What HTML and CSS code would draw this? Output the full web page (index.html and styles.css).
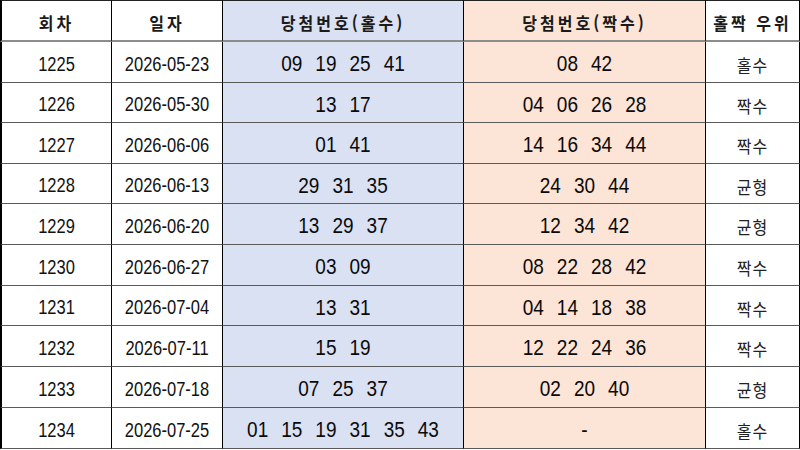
FILE: index.html
```html
<!DOCTYPE html>
<html lang="ko">
<head>
<meta charset="utf-8">
<title>당첨번호 홀짝</title>
<link rel="stylesheet" href="styles.css">
</head>
<body>
<div class="table">
  <div class="cell hd c1"><span class="t">회차</span></div>
  <div class="cell hd c2"><span class="t">일자</span></div>
  <div class="cell hd c3 odd"><span class="t">당첨번호(홀수)</span></div>
  <div class="cell hd c4 even"><span class="t">당첨번호(짝수)</span></div>
  <div class="cell hd c5"><span class="t">홀짝 우위</span></div>

  <div class="cell c1"><span class="t">1225</span></div><div class="cell c2"><span class="t">2026-05-23</span></div>
  <div class="cell c3 odd nums"><span class="t">09</span><span class="t">19</span><span class="t">25</span><span class="t">41</span></div>
  <div class="cell c4 even nums"><span class="t">08</span><span class="t">42</span></div>
  <div class="cell c5 kr"><span class="t">홀수</span></div>

  <div class="cell c1"><span class="t">1226</span></div><div class="cell c2"><span class="t">2026-05-30</span></div>
  <div class="cell c3 odd nums"><span class="t">13</span><span class="t">17</span></div>
  <div class="cell c4 even nums"><span class="t">04</span><span class="t">06</span><span class="t">26</span><span class="t">28</span></div>
  <div class="cell c5 kr"><span class="t">짝수</span></div>

  <div class="cell c1"><span class="t">1227</span></div><div class="cell c2"><span class="t">2026-06-06</span></div>
  <div class="cell c3 odd nums"><span class="t">01</span><span class="t">41</span></div>
  <div class="cell c4 even nums"><span class="t">14</span><span class="t">16</span><span class="t">34</span><span class="t">44</span></div>
  <div class="cell c5 kr"><span class="t">짝수</span></div>

  <div class="cell c1"><span class="t">1228</span></div><div class="cell c2"><span class="t">2026-06-13</span></div>
  <div class="cell c3 odd nums"><span class="t">29</span><span class="t">31</span><span class="t">35</span></div>
  <div class="cell c4 even nums"><span class="t">24</span><span class="t">30</span><span class="t">44</span></div>
  <div class="cell c5 kr"><span class="t">균형</span></div>

  <div class="cell c1"><span class="t">1229</span></div><div class="cell c2"><span class="t">2026-06-20</span></div>
  <div class="cell c3 odd nums"><span class="t">13</span><span class="t">29</span><span class="t">37</span></div>
  <div class="cell c4 even nums"><span class="t">12</span><span class="t">34</span><span class="t">42</span></div>
  <div class="cell c5 kr"><span class="t">균형</span></div>

  <div class="cell c1"><span class="t">1230</span></div><div class="cell c2"><span class="t">2026-06-27</span></div>
  <div class="cell c3 odd nums"><span class="t">03</span><span class="t">09</span></div>
  <div class="cell c4 even nums"><span class="t">08</span><span class="t">22</span><span class="t">28</span><span class="t">42</span></div>
  <div class="cell c5 kr"><span class="t">짝수</span></div>

  <div class="cell c1"><span class="t">1231</span></div><div class="cell c2"><span class="t">2026-07-04</span></div>
  <div class="cell c3 odd nums"><span class="t">13</span><span class="t">31</span></div>
  <div class="cell c4 even nums"><span class="t">04</span><span class="t">14</span><span class="t">18</span><span class="t">38</span></div>
  <div class="cell c5 kr"><span class="t">짝수</span></div>

  <div class="cell c1"><span class="t">1232</span></div><div class="cell c2"><span class="t">2026-07-11</span></div>
  <div class="cell c3 odd nums"><span class="t">15</span><span class="t">19</span></div>
  <div class="cell c4 even nums"><span class="t">12</span><span class="t">22</span><span class="t">24</span><span class="t">36</span></div>
  <div class="cell c5 kr"><span class="t">짝수</span></div>

  <div class="cell c1"><span class="t">1233</span></div><div class="cell c2"><span class="t">2026-07-18</span></div>
  <div class="cell c3 odd nums"><span class="t">07</span><span class="t">25</span><span class="t">37</span></div>
  <div class="cell c4 even nums"><span class="t">02</span><span class="t">20</span><span class="t">40</span></div>
  <div class="cell c5 kr"><span class="t">균형</span></div>

  <div class="cell c1"><span class="t">1234</span></div><div class="cell c2"><span class="t">2026-07-25</span></div>
  <div class="cell c3 odd nums"><span class="t">01</span><span class="t">15</span><span class="t">19</span><span class="t">31</span><span class="t">35</span><span class="t">43</span></div>
  <div class="cell c4 even nums"><span class="t">-</span></div>
  <div class="cell c5 kr"><span class="t">홀수</span></div>
</div>
</body>
</html>
```

FILE: styles.css
```css
html, body {
  margin: 0;
  padding: 0;
  background: #ffffff;
}

.table {
  display: grid;
  grid-template-columns: 112px 111px 241px 242px 94px;
  grid-template-rows: 42px 41px 40px 41px 40px 41px 41px 40px 41px 41px 41px;
  width: 800px;
  height: 450px;
  font-family: "Liberation Sans", Arial, "Noto Sans CJK KR", sans-serif;
  font-size: 16.5px;
  color: #111;
}

.cell {
  box-sizing: border-box;
  display: flex;
  align-items: center;
  justify-content: center;
  padding-top: 4px;
  border-bottom: 1px solid #5a5a5a;
  border-right: 1px solid #000;
  background: #fff;
  white-space: nowrap;
}

.t {
  display: inline-block;
  transform: scaleY(1.18);
}

.c1 {
  border-left: 2px solid #000;
}

.hd {
  padding-top: 2px;
  border-top: 1px solid #222;
  border-bottom: 2px solid #8c8c8c;
  font-family: "Noto Sans CJK KR", sans-serif;
  font-weight: 700;
  font-size: 16px;
  letter-spacing: 3px;
  color: #1a1a1a;
}

.hd .t {
  transform: scaleY(1.1);
}

.odd {
  background: #d9e1f2;
}

.even {
  background: #fce4d6;
}

.nums {
  font-size: 19px;
  gap: 13px;
  color: #0a0a0a;
}

.kr {
  font-family: "Noto Sans CJK KR", sans-serif;
  font-size: 16px;
  letter-spacing: 1px;
  color: #222;
}

.kr .t {
  transform: scaleY(1.1);
}
```
